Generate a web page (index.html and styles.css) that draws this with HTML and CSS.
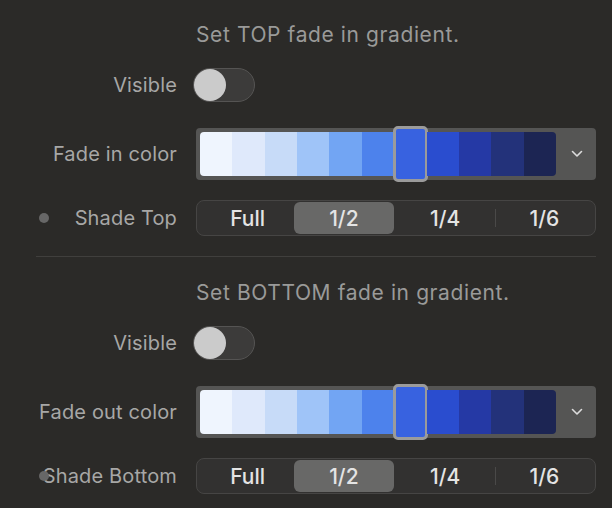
FILE: index.html
```html
<!DOCTYPE html>
<html lang="en">
<head>
    <meta charset="UTF-8">
    <meta name="viewport" content="width=device-width, initial-scale=1.0">
    <title>Gradient fade settings</title>
    <link rel="stylesheet" href="styles.css">
</head>
<body>
    <main class="panel">
        <section class="group">
            <p class="title">Set TOP fade in gradient.</p>
            <div class="row row-toggle">
                <span class="label">Visible</span>
                <div class="toggle"><span class="knob"></span></div>
            </div>
            <div class="row row-well">
                <span class="label">Fade in color</span>
                <div class="well">
                    <div class="strip">
                        <span class="sw" style="background:#eff5fe"></span>
                        <span class="sw" style="background:#dfe9fb"></span>
                        <span class="sw" style="background:#c7dbf8"></span>
                        <span class="sw" style="background:#9fc4f8"></span>
                        <span class="sw" style="background:#72a5f3"></span>
                        <span class="sw" style="background:#4d82ec"></span>
                        <span class="sw sel" style="background:#3862e0"></span>
                        <span class="sw" style="background:#2a4dcf"></span>
                        <span class="sw" style="background:#2539a5"></span>
                        <span class="sw" style="background:#23327a"></span>
                        <span class="sw" style="background:#1c2553"></span>
                    </div>
                    <div class="drop">
                        <svg width="12" height="8" viewBox="0 0 12 8"><polyline points="1.5,1.5 6,6 10.5,1.5" fill="none" stroke="#dcdcdc" stroke-width="1.6" stroke-linecap="round" stroke-linejoin="round"/></svg>
                    </div>
                </div>
            </div>
            <div class="row row-seg">
                <span class="label"><i class="dot"></i>Shade Top</span>
                <div class="seg">
                    <span class="opt">Full</span>
                    <span class="opt on">1/2</span>
                    <span class="opt">1/4</span>
                    <span class="opt split">1/6</span>
                </div>
            </div>
        </section>

        <hr class="sep">

        <section class="group">
            <p class="title">Set BOTTOM fade in gradient.</p>
            <div class="row row-toggle">
                <span class="label">Visible</span>
                <div class="toggle"><span class="knob"></span></div>
            </div>
            <div class="row row-well">
                <span class="label">Fade out color</span>
                <div class="well">
                    <div class="strip">
                        <span class="sw" style="background:#eff5fe"></span>
                        <span class="sw" style="background:#dfe9fb"></span>
                        <span class="sw" style="background:#c7dbf8"></span>
                        <span class="sw" style="background:#9fc4f8"></span>
                        <span class="sw" style="background:#72a5f3"></span>
                        <span class="sw" style="background:#4d82ec"></span>
                        <span class="sw sel" style="background:#3862e0"></span>
                        <span class="sw" style="background:#2a4dcf"></span>
                        <span class="sw" style="background:#2539a5"></span>
                        <span class="sw" style="background:#23327a"></span>
                        <span class="sw" style="background:#1c2553"></span>
                    </div>
                    <div class="drop">
                        <svg width="12" height="8" viewBox="0 0 12 8"><polyline points="1.5,1.5 6,6 10.5,1.5" fill="none" stroke="#dcdcdc" stroke-width="1.6" stroke-linecap="round" stroke-linejoin="round"/></svg>
                    </div>
                </div>
            </div>
            <div class="row row-seg">
                <span class="label"><i class="dot"></i>Shade Bottom</span>
                <div class="seg">
                    <span class="opt">Full</span>
                    <span class="opt on">1/2</span>
                    <span class="opt">1/4</span>
                    <span class="opt split">1/6</span>
                </div>
            </div>
        </section>
    </main>
</body>
</html>
```

FILE: styles.css
```css
body {
    margin: 0;
    background-color: #2b2a28;
    font-family: "Inter", "Noto Sans", sans-serif;
    height: 508px;
    overflow: hidden;
}

.panel {
    padding-top: 23px;
    width: 612px;
}

.group {
    display: flex;
    flex-direction: column;
}

.title {
    margin: 0 0 0 196px;
    height: 24px;
    line-height: 24px;
    font-size: 21px;
    letter-spacing: 0.6px;
    color: #9a9a99;
}

.row {
    display: grid;
    grid-template-columns: 177px 400px;
    column-gap: 19px;
    align-items: center;
}
.row-toggle {
    margin-top: 21px;
    height: 34px;
}
.row-well {
    margin-top: 26px;
    height: 52px;
}
.row-seg {
    margin-top: 20px;
    height: 36px;
}

.label {
    position: relative;
    text-align: right;
    font-size: 20px;
    letter-spacing: 0.15px;
    color: #a7a7a6;
    white-space: nowrap;
}

.dot {
    position: absolute;
    left: 39px;
    top: 50%;
    width: 10px;
    height: 10px;
    margin-top: -5px;
    border-radius: 50%;
    background-color: #676767;
}

/* switch */
.toggle {
    width: 60px;
    height: 32px;
    margin-left: -3px;
    border: 1px solid #555453;
    border-radius: 17px;
    background-color: #3c3b3a;
    display: flex;
    align-items: center;
}
.knob {
    width: 32px;
    height: 32px;
    border-radius: 50%;
    background-color: #cbcbcb;
}

/* color well */
.well {
    height: 52px;
    box-sizing: border-box;
    padding: 4px 0 4px 4px;
    background-color: #555554;
    border-radius: 4px;
    display: flex;
}
.strip {
    width: 356px;
    display: flex;
}
.sw {
    flex: 1;
    position: relative;
}
.sw:first-child {
    border-radius: 4px 0 0 4px;
}
.sw:last-child {
    border-radius: 0 4px 4px 0;
}
.sel::after {
    content: '';
    position: absolute;
    top: -6px;
    bottom: -6px;
    left: -1px;
    right: -1px;
    background: inherit;
    border: 3px solid #9b9b9b;
    border-radius: 5px;
}
.drop {
    flex: 1;
    display: flex;
    align-items: center;
    justify-content: center;
    padding-left: 2px;
}

/* segmented control */
.seg {
    height: 36px;
    box-sizing: border-box;
    border: 1px solid #464544;
    border-radius: 8px;
    background-color: #323130;
    display: flex;
    padding: 1px;
}
.opt {
    flex: 1;
    display: flex;
    align-items: center;
    justify-content: center;
    font-size: 21px;
    font-weight: 500;
    color: #e4e4e4;
    border-radius: 6px;
    position: relative;
}
.opt.on {
    margin: 0 2px 0 -3px;
    background-color: #686867;
}
.split::before {
    content: '';
    position: absolute;
    left: 0;
    top: 7px;
    bottom: 7px;
    width: 1px;
    background-color: #4a4948;
}

.sep {
    margin: 20px 16px 24px 36px;
    border: 0;
    height: 1px;
    background-color: #403f3d;
}
```
